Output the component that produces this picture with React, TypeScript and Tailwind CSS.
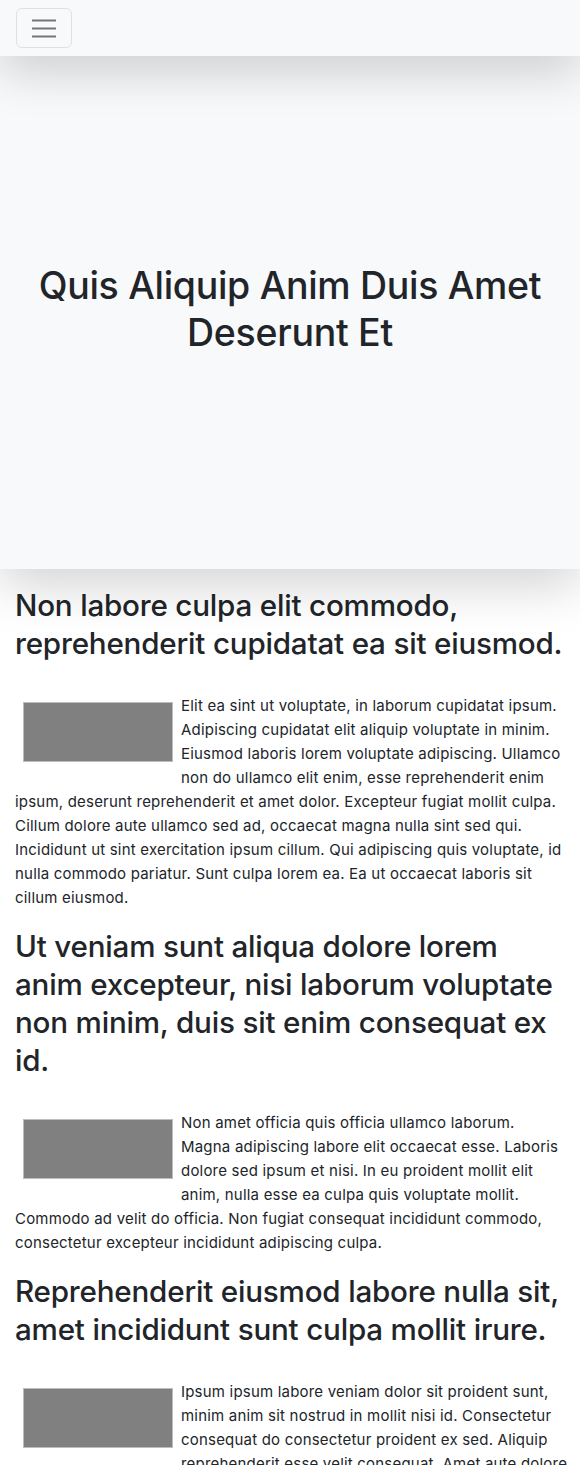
import React from "react";

const sections: { title: string[]; body: string[] }[] = [
  {
    title: ["Non labore culpa elit commodo,", "reprehenderit cupidatat ea sit eiusmod."],
    body: [
      "Elit ea sint ut voluptate, in laborum cupidatat ipsum.",
      "Adipiscing cupidatat elit aliquip voluptate in minim.",
      "Eiusmod laboris lorem voluptate adipiscing. Ullamco",
      "non do ullamco elit enim, esse reprehenderit enim",
      "ipsum, deserunt reprehenderit et amet dolor. Excepteur fugiat mollit culpa.",
      "Cillum dolore aute ullamco sed ad, occaecat magna nulla sint sed qui.",
      "Incididunt ut sint exercitation ipsum cillum. Qui adipiscing quis voluptate, id",
      "nulla commodo pariatur. Sunt culpa lorem ea. Ea ut occaecat laboris sit",
      "cillum eiusmod.",
    ],
  },
  {
    title: [
      "Ut veniam sunt aliqua dolore lorem",
      "anim excepteur, nisi laborum voluptate",
      "non minim, duis sit enim consequat ex",
      "id.",
    ],
    body: [
      "Non amet officia quis officia ullamco laborum.",
      "Magna adipiscing labore elit occaecat esse. Laboris",
      "dolore sed ipsum et nisi. In eu proident mollit elit",
      "anim, nulla esse ea culpa quis voluptate mollit.",
      "Commodo ad velit do officia. Non fugiat consequat incididunt commodo,",
      "consectetur excepteur incididunt adipiscing culpa.",
    ],
  },
  {
    title: ["Reprehenderit eiusmod labore nulla sit,", "amet incididunt sunt culpa mollit irure."],
    body: [
      "Ipsum ipsum labore veniam dolor sit proident sunt,",
      "minim anim sit nostrud in mollit nisi id. Consectetur",
      "consequat do consectetur proident ex sed. Aliquip",
      "reprehenderit esse velit consequat. Amet aute dolore",
      "ullamco sit, laboris officia commodo. Aute veniam labore sint dolor,",
      "esse ut consectetur occaecat sed.",
    ],
  },
];

function Lines({ lines }: { lines: string[] }) {
  return (
    <>
      {lines.map((l, i) => (
        <React.Fragment key={i}>
          {l}
          {i < lines.length - 1 && <br />}
        </React.Fragment>
      ))}
    </>
  );
}

export default function App() {
  return (
    <div className="h-[1465px] overflow-hidden bg-white text-[#212529] font-['Inter','Noto_Sans',sans-serif]">
      <nav className="relative z-20 h-[56px] bg-[#f8f9fa] flex items-center px-4 shadow-[0_1rem_3rem_rgba(0,0,0,0.175)]">
        <button className="w-[56px] h-[40px] rounded-[6px] border border-[rgba(0,0,0,0.1)] flex items-center justify-center">
          <svg width="30" height="30" viewBox="0 0 30 30">
            <path d="M3 7.5h24M3 15.5h24M3 23.5h24" stroke="rgba(33,37,41,0.62)" strokeWidth="2" />
          </svg>
        </button>
      </nav>
      <header className="relative z-10 h-[513px] bg-[#f8f9fa] flex items-center justify-center px-6 shadow-[0_1rem_3rem_rgba(0,0,0,0.175)]">
        <h1 className="text-center text-[37.5px] leading-[47px] font-medium tracking-[-0.3px] mt-[-8px]">
          Quis Aliquip Anim Duis Amet
          <br />
          Deserunt Et
        </h1>
      </header>
      <main className="px-[15px]">
        {sections.map((s, i) => (
          <section key={i} className="pt-[17px]">
            <h2 className="text-[29.6px] leading-[38px] font-medium tracking-[-0.2px] whitespace-nowrap">
              <Lines lines={s.title} />
            </h2>
            <p className="mt-[32px] text-[15px] leading-[24px] tracking-[0.2px] whitespace-nowrap">
              <span className="float-left m-2 w-[150px] h-[60px] bg-[#808080] border border-[#bdbdbd]" />
              <Lines lines={s.body} />
            </p>
          </section>
        ))}
      </main>
    </div>
  );
}
